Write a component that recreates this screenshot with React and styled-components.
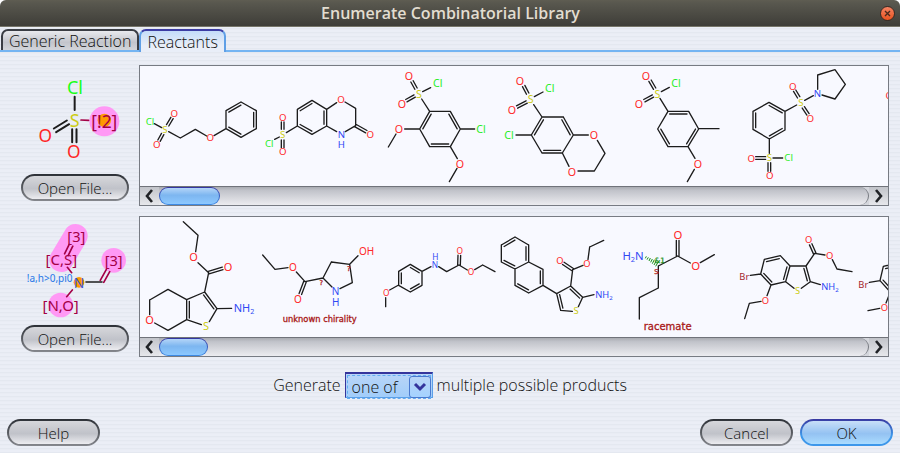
import React from 'react';
import styled, { createGlobalStyle, css } from 'styled-components';

const GlobalStyle = createGlobalStyle`
  * { box-sizing: border-box; }
  body { margin: 0; background: #fff; }
  button, select { font: inherit; color: inherit; margin: 0; padding: 0; }
`;

const Window = styled.main`
  display: flex;
  flex-direction: column;
  min-height: 100vh;
  overflow: hidden;
  border-radius: 6px 6px 0 0;
  font-family: 'Open Sans', 'Noto Sans', sans-serif;
  font-size: 16px;
  font-weight: 300;
  color: #111;
  background: repeating-linear-gradient(#e4e8f0 0 1px, #e9ecf4 1px 2px, #ebeef6 2px 4px);
`;

const TitleBar = styled.header`
  display: flex;
  align-items: center;
  height: 27px;
  padding: 0 5px 0 21px;
  border-bottom: 1px solid #767569;
  background: linear-gradient(#5f5d52, #59584f 10%, #3e3d38);
`;

const Title = styled.h1`
  flex: 1;
  margin: 0;
  text-align: center;
  font-size: 16px;
  font-weight: 600;
  line-height: 26px;
  color: #e2ddd0;
`;

const CloseButton = styled.button`
  display: grid;
  place-items: center;
  width: 15px;
  height: 15px;
  border: 1px solid #3a2a22;
  border-radius: 50%;
  background: linear-gradient(#f58363, #e9531f);
`;

const Tabs = styled.nav`
  display: flex;
  height: 25px;
  padding: 2px 1px 0;
  border-bottom: 2px solid #74b4f2;
`;

const Tab = styled.button`
  height: 21px;
  padding: 0 6px;
  line-height: 20px;
  border: 2px solid #3a3d44;
  border-bottom: 0;
  border-radius: 7px 7px 0 0;
  background: linear-gradient(#e8e9ed, #c3c5cc 60%, #d3d5da);
  ${(p) => p.$active && css`
    height: 23px;
    border-color: #3c3ca4 #5f9fe6 #74b4f2;
    background: linear-gradient(#c4dcf9, #e9eef8 70%);
  `}
`;

const Content = styled.section`
  display: flex;
  flex-direction: column;
  gap: 10px;
  padding: 13px 11px 0 11px;
`;

const ReactantRow = styled.div`
  display: flex;
`;

const Preview = styled.div`
  display: flex;
  flex-direction: column;
  align-items: center;
  flex: 0 0 128px;
  padding-top: 1px;
  gap: 2px;
`;

const PreviewDrawing = styled.svg`
  width: 108px;
  height: 106px;
`;

const PushButton = styled.button`
  height: 27px;
  width: ${(p) => p.$width}px;
  border: 2px solid transparent;
  border-radius: 14px;
  font-size: 15px;
  line-height: 22px;
  background:
    linear-gradient(#d6d7db, #c0c2c9 55%, #ececf0) padding-box,
    linear-gradient(#2c3036, #85878d) border-box;
  ${(p) => p.$primary && css`
    background:
      linear-gradient(#c8dff8, #94c2f2 55%, #aadcff) padding-box,
      linear-gradient(#3838a0, #3d97ea 60%) border-box;
  `}
`;

const Panel = styled.div`
  flex: 1;
  min-width: 0;
  border: 1px solid #777b83;
  background: #f8f9ff;
`;

const MoleculeStrip = styled.div`
  display: flex;
  height: 120px;
  overflow: hidden;
`;

const MoleculeCell = styled.svg`
  flex: 0 0 120px;
  height: 120px;
  overflow: visible;
`;

const ScrollBar = styled.div`
  display: flex;
  height: 19px;
  border-top: 1px solid #70737a;
  background: #d4d6dc;
`;

const ScrollButton = styled.button`
  display: grid;
  place-items: center;
  width: 19px;
  border: 0;
  background: linear-gradient(#c2c4ca, #e6e7eb);
`;

const ScrollTrack = styled.div`
  flex: 1;
  border-right: 1px solid #787b82;
  border-radius: 0 9px 9px 0;
  background: linear-gradient(#a9abb1, #c1c3ca 20%, #ececf0);
`;

const ScrollThumb = styled.div`
  width: ${(p) => p.$width}px;
  height: 18px;
  border: 1px solid transparent;
  border-radius: 9px;
  background:
    linear-gradient(#b4d5f8, #7db6f0 45%, #8cc8ff) padding-box,
    linear-gradient(#3434a0, #3d8ce6) border-box;
`;

const GenerateRow = styled.label`
  display: flex;
  justify-content: center;
  align-items: center;
  gap: 4px;
  margin-top: 5px;
`;

const SelectFrame = styled.span`
  display: grid;
  width: 88px;
  height: 26px;
  border: 1px solid #5b9fe8;
  border-top: 2px solid #35359c;
  border-left-color: #35359c;
  background: linear-gradient(#b9d5f7, #a1cdfa);
`;

const Select = styled.select`
  grid-area: 1 / 1;
  appearance: none;
  margin: 1px;
  padding-left: 4px;
  border: 1px dashed #62acf2;
  background: transparent;
  outline: 0;
`;

const SelectArrow = styled.svg`
  grid-area: 1 / 1;
  justify-self: end;
  align-self: center;
  width: 22px;
  height: 22px;
  margin-right: 1px;
  border: 1px solid #4a79cf;
  border-radius: 3px;
  background: linear-gradient(#b9d5f7, #a4d2ff);
  pointer-events: none;
`;

const Footer = styled.footer`
  display: flex;
  gap: 7px;
  margin-top: auto;
  padding: 0 7px 7px;
`;

const Spacer = styled.span`
  flex: 1;
`;

const BLACK = '#1c1c1c';
const MAROON = '#a30046';
const ATOM_COLORS = {
  O: '#ff2626', OH: '#ff2626', S: '#cccc14', N: '#3048f4', H: '#3048f4', NH2: '#3048f4', H2N: '#3048f4',
  Cl: '#28ee28', Br: '#a3262c',
};

/* A bond is [x1, y1, x2, y2, kind]: 1 puts a second line on its right, 2 draws an even pair. */
function bondPath([x1, y1, x2, y2, kind], gap) {
  const length = Math.hypot(x2 - x1, y2 - y1);
  const ux = (x2 - x1) / length;
  const uy = (y2 - y1) / length;
  const line = (offset, trim) =>
    `M${x1 - uy * offset + ux * trim} ${y1 + ux * offset + uy * trim}` +
    `L${x2 - uy * offset - ux * trim} ${y2 + ux * offset - uy * trim}`;
  if (kind === 2) return line(gap / 2, 0) + line(-gap / 2, 0);
  if (kind === 1) return line(0, 0) + line(gap, 5);
  return line(0, 0);
}

function Bonds({ bonds, color = BLACK, width = 4, gap = 8 }) {
  return <path d={bonds.map((b) => bondPath(b, gap)).join('')} fill="none" stroke={color} strokeWidth={width} strokeLinecap="round" />;
}

function Atom({ symbol, x, y, size, color }) {
  let body = symbol;
  if (symbol === 'NH2') body = <>NH<tspan fontSize={size * 0.65} dy={size * 0.2}>2</tspan></>;
  if (symbol === 'H2N') body = <>H<tspan fontSize={size * 0.65} dy={size * 0.2}>2</tspan><tspan dy={-size * 0.2}>N</tspan></>;
  return (
    <text x={x} y={y + size * 0.36} fontSize={size} fontWeight="400" fontFamily="'Noto Sans', sans-serif" textAnchor="middle" fill={color || ATOM_COLORS[symbol]}>
      {body}
    </text>
  );
}

function Molecule({ data }) {
  const { origin, size, atoms, bonds, notes = [], hash } = data;
  return (
    <MoleculeCell viewBox={`${origin[0]} ${origin[1]} 360 360`} aria-hidden="true">
      <Bonds bonds={bonds} />
      {hash && <path d={hash} stroke="#169016" strokeWidth="3" fill="none" />}
      {atoms.map(([symbol, x, y]) => <Atom key={`${x}-${y}`} symbol={symbol} x={x} y={y} size={size} />)}
      {notes.map(([text, x, y, noteSize, color]) => (
        <text key={text + x} x={x} y={y} fontSize={noteSize} fontWeight="400" fontFamily="'DejaVu Sans', sans-serif" textAnchor="middle" fill={color} stroke={color} strokeWidth="0.9">{text}</text>
      ))}
    </MoleculeCell>
  );
}

const SULFONYL_CHLORIDES = [
  {
    origin: [6, 18], size: 29,
    atoms: [['Cl', 36, 184], ['O', 109, 162], ['S', 81, 210], ['O', 56, 255], ['O', 217, 234]],
    bonds: [[49, 191, 71, 203], [89, 196, 102, 174, 2], [74, 222, 63, 242, 2], [92, 215, 127, 234], [127, 234, 172, 208], [172, 208, 206, 228], [228, 227, 264, 206],
      [264, 206, 264, 152], [264, 152, 309, 126, 1], [309, 126, 355, 152], [355, 152, 355, 206, 1], [355, 206, 309, 232], [309, 232, 264, 206, 1]],
  },
  {
    origin: [366, 18], size: 29,
    atoms: [['O', 609, 119], ['N', 610, 223], ['H', 610, 254], ['O', 697, 223], ['S', 434, 224], ['O', 434, 173], ['O', 434, 276], ['Cl', 394, 250]],
    bonds: [[478, 148, 522, 121, 1], [522, 121, 566, 148], [566, 148, 566, 198, 1], [566, 198, 522, 223], [522, 223, 478, 198, 1], [478, 198, 478, 148],
      [566, 148, 596, 128], [621, 126, 653, 145], [653, 145, 653, 197], [653, 197, 622, 215], [566, 198, 596, 215], [653, 197, 685, 215, 2],
      [445, 218, 478, 198], [434, 208, 434, 186, 2], [434, 240, 434, 263, 2], [410, 238, 424, 231]],
  },
  {
    origin: [0, 18], size: 32,
    atoms: [['O', 87, 48], ['Cl', 173, 70], ['S', 117, 101], ['O', 66, 133], ['O', 57, 207], ['Cl', 303, 207], ['O', 240, 311]],
    bonds: [[108, 86, 96, 64, 2], [128, 95, 152, 83], [104, 108, 79, 122, 2], [125, 117, 149, 154],
      [149, 154, 211, 154], [211, 154, 241, 207, 1], [241, 207, 211, 260], [211, 260, 149, 260, 1], [149, 260, 119, 207], [119, 207, 149, 154, 1],
      [241, 207, 284, 207], [119, 207, 74, 207], [48, 222, 25, 261], [211, 260, 232, 296], [231, 325, 208, 365]],
  },
  {
    origin: [360, 18], size: 32,
    atoms: [['O', 420, 62], ['Cl', 509, 83], ['S', 452, 118], ['O', 396, 149], ['Cl', 387, 226], ['O', 642, 226], ['O', 576, 335]],
    bonds: [[443, 101, 431, 78, 2], [463, 110, 489, 96], [440, 126, 411, 141, 2], [461, 134, 486, 171],
      [486, 171, 550, 171], [550, 171, 580, 225, 1], [580, 225, 547, 279], [547, 279, 486, 279, 1], [486, 279, 454, 225], [454, 225, 486, 171, 1],
      [408, 225, 454, 225], [580, 225, 625, 225], [652, 241, 675, 280], [675, 280, 643, 333], [643, 333, 594, 333], [567, 319, 547, 279]],
  },
  {
    origin: [0, 18], size: 32,
    atoms: [['O', 78, 48], ['Cl', 168, 70], ['S', 112, 101], ['O', 57, 133], ['O', 234, 311]],
    bonds: [[104, 86, 90, 62, 2], [124, 95, 148, 82], [99, 108, 73, 122, 2], [120, 115, 144, 154],
      [144, 154, 206, 154, 1], [206, 154, 236, 207], [236, 207, 204, 260, 1], [204, 260, 144, 260], [144, 260, 113, 207, 1], [113, 207, 144, 154],
      [236, 206, 297, 206], [204, 260, 225, 295], [223, 328, 202, 365]],
  },
  {
    origin: [360, 18], size: 29,
    atoms: [['S', 543, 128], ['O', 518, 80], ['O', 571, 176], ['N', 592, 101], ['S', 448, 294], ['O', 394, 295], ['Cl', 506, 294], ['O', 449, 347]],
    bonds: [[447, 127, 495, 154, 1], [495, 154, 495, 210], [495, 210, 448, 237, 1], [448, 237, 399, 208], [399, 208, 399, 154, 1], [399, 154, 447, 127],
      [495, 154, 530, 135], [536, 112, 524, 92, 2], [550, 142, 564, 163, 2], [554, 121, 580, 107],
      [593, 88, 593, 45], [593, 45, 645, 29], [645, 29, 676, 73], [676, 73, 645, 117], [645, 117, 606, 105],
      [448, 237, 448, 280], [437, 294, 407, 294, 2], [459, 294, 488, 294], [448, 308, 448, 334, 2]],
  },
  { origin: [720, 18], size: 29, atoms: [['O', 808, 106]], bonds: [] },
];

const AMINES = [
  {
    origin: [6, 15], size: 33,
    atoms: [['O', 167, 135], ['O', 270, 165], ['S', 204, 342], ['NH2', 318, 287], ['O', 35, 324]],
    bonds: [[136, 29, 180, 70], [180, 70, 173, 119], [180, 152, 212, 182], [212, 182, 254, 169, 2], [212, 182, 200, 240],
      [200, 240, 237, 290, 1], [237, 290, 214, 329], [190, 338, 146, 323], [146, 323, 146, 263, 1], [146, 263, 200, 240], [237, 290, 281, 289],
      [146, 263, 90, 232], [90, 232, 35, 264], [35, 264, 35, 308], [50, 333, 90, 355], [90, 355, 146, 323]],
  },
  {
    origin: [366, 15], size: 30,
    atoms: [['O', 465, 166], ['O', 480, 262], ['N', 593, 238], ['H', 593, 271], ['OH', 686, 118]],
    bonds: [[374, 129, 411, 172], [411, 172, 450, 167], [475, 180, 501, 209], [501, 209, 487, 246, 2], [501, 209, 555, 198],
      [555, 198, 580, 150], [580, 150, 635, 157], [635, 157, 643, 212], [643, 212, 606, 230], [555, 198, 582, 225], [635, 157, 660, 131]],
    notes: [['?', 550, 218, 20, '#b01818'], ['?', 632, 178, 20, '#b01818'], ['unknown chirality', 545, 329, 25, '#a81818']],
  },
  {
    origin: [0, 15], size: 25,
    atoms: [['O', 19, 244], ['N', 165, 158], ['H', 166, 134], ['O', 239, 117], ['O', 273, 180]],
    bonds: [[17, 257, 17, 284], [29, 234, 56, 219], [56, 178, 91, 157], [91, 157, 126, 178, 1], [126, 178, 126, 220], [126, 220, 91, 240, 1], [91, 240, 56, 220], [56, 220, 56, 178, 1],
      [126, 178, 153, 164], [176, 164, 200, 179], [200, 179, 237, 159], [237, 159, 238, 130, 2], [237, 159, 262, 174], [284, 173, 308, 159], [308, 159, 345, 179]],
  },
  {
    origin: [360, 15], size: 28,
    atoms: [['S', 588, 297], ['NH2', 672, 247], ['O', 540, 147], ['O', 621, 154]],
    bonds: [[405, 75, 446, 99], [446, 99, 446, 150, 1], [446, 150, 405, 171], [405, 171, 364, 150, 1], [364, 150, 364, 99], [364, 99, 405, 75, 1],
      [446, 150, 489, 172], [489, 172, 489, 220, 1], [489, 220, 446, 243], [446, 243, 405, 220, 1], [405, 220, 405, 171],
      [489, 220, 530, 245], [530, 245, 572, 222], [572, 222, 608, 256, 1], [608, 256, 595, 284], [577, 298, 542, 295], [542, 295, 530, 245, 1], [608, 256, 642, 248],
      [572, 222, 578, 173], [578, 173, 550, 154, 2], [578, 173, 609, 160], [624, 142, 629, 105], [629, 105, 671, 85]],
  },
  {
    origin: [0, 15], size: 34,
    atoms: [['H2N', 39, 131], ['O', 174, 69], ['O', 227, 162]],
    bonds: [[115, 162, 173, 132], [173, 132, 173, 85, 2], [173, 132, 211, 153], [241, 152, 283, 128], [115, 162, 115, 228], [115, 228, 58, 257], [58, 257, 58, 321]],
    hash: 'M79 133L76 139M85 136L81 143M91 138L87 147M97 141L92 151M103 143L97 155M109 146L102 159M115 149L107 163',
    notes: [['&1', 119, 154, 22, '#209020'], ['S', 109, 185, 20, '#b01818'], ['racemate', 143, 355, 30, '#a81818']],
  },
  {
    origin: [360, 15], size: 28,
    atoms: [['S', 533, 237], ['NH2', 630, 223], ['O', 566, 83], ['O', 629, 130], ['Br', 373, 193], ['O', 436, 265]],
    bonds: [[433, 142, 481, 131, 1], [481, 131, 510, 162], [510, 162, 497, 209, 1], [497, 209, 453, 219], [453, 219, 422, 186, 1], [422, 186, 433, 142],
      [510, 162, 558, 162], [558, 162, 571, 209, 1], [571, 209, 544, 229], [522, 229, 497, 209], [571, 209, 601, 218],
      [558, 162, 584, 124], [584, 124, 572, 97, 2], [584, 124, 615, 129], [637, 143, 651, 171], [651, 171, 696, 179],
      [391, 190, 422, 186], [453, 219, 441, 251], [423, 268, 388, 274], [388, 274, 374, 320]],
  },
  {
    origin: [720, 15], size: 28,
    atoms: [['Br', 730, 217], ['O', 793, 287]],
    bonds: [[748, 211, 780, 206], [780, 206, 790, 163], [790, 163, 836, 152, 1], [811, 240, 780, 206, 1], [811, 240, 798, 273], [779, 289, 744, 296]],
  },
];

function SulfonylPreview() {
  return (
    <PreviewDrawing viewBox="63 18 324 318" aria-hidden="true">
      <circle cx="313" cy="184" r="45" fill="#ff99f5" />
      <circle cx="313" cy="181" r="20" fill="#ff9900" />
      <Bonds width={6} gap={13} bonds={[[224, 110, 224, 150], [204, 187, 165, 211, 2], [223, 208, 223, 247, 2]]} />
      <Bonds width={5} color={MAROON} bonds={[[243, 180, 266, 181]]} />
      <Atom symbol="Cl" x={225} y={82} size={54} color="#19ff19" />
      <Atom symbol="S" x={224} y={181} size={54} />
      <Atom symbol="O" x={136} y={228} size={52} />
      <Atom symbol="O" x={221} y={275} size={52} />
      <Atom symbol="[!2]" x={313} y={184} size={52} color={MAROON} />
    </PreviewDrawing>
  );
}

function AminePreview() {
  return (
    <PreviewDrawing viewBox="63 21 324 318" aria-hidden="true" overflow="visible">
      <path d="M184 150L227 78" stroke="#ff99f5" strokeWidth="72" strokeLinecap="round" />
      <circle cx="341" cy="151" r="37" fill="#ff99f5" />
      <circle cx="182" cy="285" r="37" fill="#ff99f5" />
      <circle cx="237" cy="217" r="16" fill="#ff9900" />
      <Bonds width={5} bonds={[[258, 216, 306, 216]]} />
      <Bonds width={5} gap={12} color={MAROON} bonds={[[306, 214, 324, 182, 2], [199, 134, 213, 106, 2], [202, 172, 215, 188], [217, 240, 200, 260]]} />
      <Atom symbol="[3]" x={229} y={80} size={44} color={MAROON} />
      <Atom symbol="[3]" x={341} y={152} size={44} color={MAROON} />
      <Atom symbol="[C,S]" x={184} y={150} size={45} color={MAROON} />
      <Atom symbol="[N,O]" x={182} y={286} size={45} color={MAROON} />
      <Atom symbol="!a,h>0,pi0" x={149} y={206} size={30} color="#2878e8" />
      <Atom symbol="N" x={237} y={218} size={42} color="#4058d8" />
    </PreviewDrawing>
  );
}

function Chevron({ d }) {
  return (
    <svg width="11" height="14" viewBox="0 0 11 14" aria-hidden="true">
      <path d={d} fill="none" stroke="#202226" strokeWidth="2.6" />
    </svg>
  );
}

function ReactantPanel({ label, molecules, thumb }) {
  return (
    <Panel aria-label={label}>
      <MoleculeStrip>
        {molecules.map((m, i) => <Molecule key={i} data={m} />)}
      </MoleculeStrip>
      <ScrollBar>
        <ScrollButton aria-label="Scroll left"><Chevron d="M8 1L3 7L8 13" /></ScrollButton>
        <ScrollTrack>
          <ScrollThumb $width={thumb} />
        </ScrollTrack>
        <ScrollButton aria-label="Scroll right"><Chevron d="M3 1L8 7L3 13" /></ScrollButton>
      </ScrollBar>
    </Panel>
  );
}

export default function App() {
  return (
    <>
      <GlobalStyle />
      <Window>
        <TitleBar>
          <Title>Enumerate Combinatorial Library</Title>
          <CloseButton aria-label="Close">
            <svg width="7" height="7" viewBox="0 0 7 7" aria-hidden="true">
              <path d="M1 1L6 6M6 1L1 6" stroke="#4a2a1c" strokeWidth="1.4" />
            </svg>
          </CloseButton>
        </TitleBar>
        <Tabs>
          <Tab>Generic Reaction</Tab>
          <Tab $active>Reactants</Tab>
        </Tabs>
        <Content>
          <ReactantRow>
            <Preview>
              <SulfonylPreview />
              <PushButton $width={108}>Open File...</PushButton>
            </Preview>
            <ReactantPanel label="Reactant 1" molecules={SULFONYL_CHLORIDES} thumb={61} />
          </ReactantRow>
          <ReactantRow>
            <Preview>
              <AminePreview />
              <PushButton $width={108}>Open File...</PushButton>
            </Preview>
            <ReactantPanel label="Reactant 2" molecules={AMINES} thumb={49} />
          </ReactantRow>
          <GenerateRow>
            Generate
            <SelectFrame>
              <Select defaultValue="one">
                <option value="one">one of</option>
                <option value="all">all</option>
              </Select>
              <SelectArrow viewBox="0 0 20 20" aria-hidden="true">
                <path d="M5 7L10 12L15 7" fill="none" stroke="#34349c" strokeWidth="3" />
              </SelectArrow>
            </SelectFrame>
            multiple possible products
          </GenerateRow>
        </Content>
        <Footer>
          <PushButton $width={93}>Help</PushButton>
          <Spacer />
          <PushButton $width={93}>Cancel</PushButton>
          <PushButton $width={93} $primary>OK</PushButton>
        </Footer>
      </Window>
    </>
  );
}
